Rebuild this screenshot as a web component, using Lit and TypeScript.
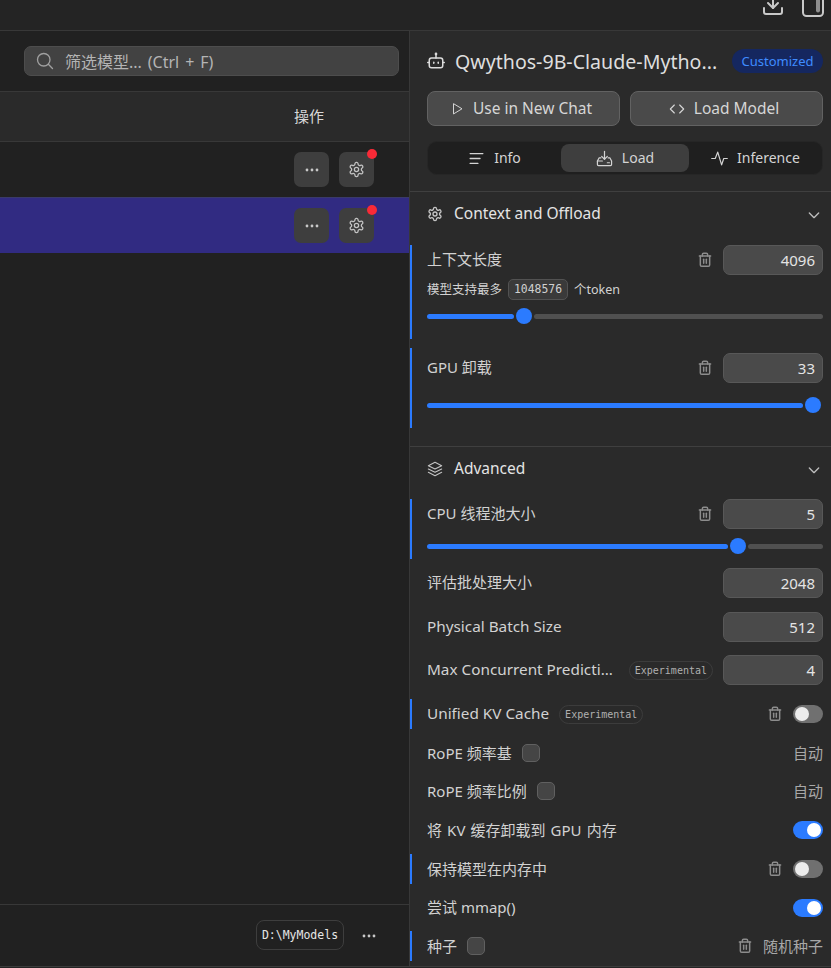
import { LitElement, html, css, svg } from "lit";
import { customElement } from "lit/decorators.js";

const ic = (size: number, body: unknown, sw = 2, cls = "") =>
  html`<svg class=${cls} width=${size} height=${size} viewBox="0 0 24 24" fill="none" stroke="currentColor" stroke-width=${sw} stroke-linecap="round" stroke-linejoin="round">${body}</svg>`;

const gearP = svg`<path d="M12.22 2h-.44a2 2 0 0 0-2 2v.18a2 2 0 0 1-1 1.73l-.43.25a2 2 0 0 1-2 0l-.15-.08a2 2 0 0 0-2.73.73l-.22.38a2 2 0 0 0 .73 2.73l.15.1a2 2 0 0 1 1 1.72v.51a2 2 0 0 1-1 1.74l-.15.09a2 2 0 0 0-.73 2.73l.22.38a2 2 0 0 0 2.73.73l.15-.08a2 2 0 0 1 2 0l.43.25a2 2 0 0 1 1 1.73V20a2 2 0 0 0 2 2h.44a2 2 0 0 0 2-2v-.18a2 2 0 0 1 1-1.73l.43-.25a2 2 0 0 1 2 0l.15.08a2 2 0 0 0 2.73-.73l.22-.39a2 2 0 0 0-.73-2.73l-.15-.08a2 2 0 0 1-1-1.74v-.5a2 2 0 0 1 1-1.74l.15-.09a2 2 0 0 0 .73-2.73l-.22-.38a2 2 0 0 0-2.73-.73l-.15.08a2 2 0 0 1-2 0l-.43-.25a2 2 0 0 1-1-1.73V4a2 2 0 0 0-2-2z"/><circle cx="12" cy="12" r="3"/>`;
const trashP = svg`<path d="M3.5 6h17"/><path d="M19 6v13.5a2 2 0 0 1-2 2H7a2 2 0 0 1-2-2V6"/><path d="M8 6V4a2 2 0 0 1 2-2h4a2 2 0 0 1 2 2v2"/><path d="M10 11v6"/><path d="M14 11v6"/>`;
const chevP = svg`<path d="m5 9 7 7 7-7"/>`;
const dots = html`<svg class="dots" width="14" height="4" viewBox="0 0 14 4"><circle cx="2" cy="2" r="1.4"/><circle cx="7" cy="2" r="1.4"/><circle cx="12" cy="2" r="1.4"/></svg>`;

@customElement("app-root")
export class AppRoot extends LitElement {
  static styles = css`
    :host { display: block; width: 831px; height: 968px; overflow: hidden; background: #242424; color: #dcdcdc;
      font-family: "Noto Sans", "Noto Sans CJK SC", sans-serif; font-size: 15px; }
    * { box-sizing: border-box; }
    svg { display: block; flex: none; }
    .top { height: 31px; border-bottom: 1px solid #383838; background: #242424; display: flex; justify-content: flex-end; align-items: flex-end; padding-right: 6px; gap: 16px; overflow: hidden; color: #c8c8c8; }
    .top svg { margin-bottom: 13px; }
    .main { display: flex; height: 936px; border-bottom: 1px solid #3c3c3c; }
    .left { width: 410px; flex: none; background: #212121; border-right: 1px solid #383838; display: flex; flex-direction: column; }
    .search-bar { height: 61px; border-bottom: 1px solid #383838; padding: 15px 10px 0 24px; }
    .search { height: 30px; border: 1px solid #4d4d4d; border-radius: 7px; background: #424242; display: flex; align-items: center; padding-left: 10px; gap: 10px; color: #b4b4b4; font-size: 16px; word-spacing: 1.8px; }
    .search svg { color: #a0a0a0; }
    .thead { height: 50px; background: #2a2a2a; border-bottom: 1px solid #383838; display: flex; align-items: center; padding: 0 0 2px 294px; font-size: 15px; color: #d8d8d8; }
    .row { height: 55px; display: flex; align-items: center; padding-left: 294px; gap: 10px; }
    .row.sel { background: #312b82; height: 56px; border-top: 1px solid #3a3a6a; }
    .iconbtn { width: 35px; height: 35px; border-radius: 7px; background: #3e3e3e; display: flex; align-items: center; justify-content: center; position: relative; color: #c4c4c4; }
    .dots { fill: #c8c8c8; }
    .dot { position: absolute; right: -3px; top: -3px; width: 10px; height: 10px; border-radius: 50%; background: #f92a37; }
    .spacer { flex: 1; }
    .foot { height: 62px; border-top: 1px solid #383838; display: flex; align-items: center; padding-left: 256px; gap: 18px; }
    .path { height: 30px; width: 88px; margin-bottom: 2px; border: 1px solid #3e3e3e; border-radius: 8px; display: flex; align-items: center; justify-content: center; font-family: "DejaVu Sans Mono", monospace; font-size: 11.5px; color: #e6e6e6; }
    .right { flex: 1; background: #2a2a2a; display: flex; flex-direction: column; }
    .head { height: 161px; flex: none; padding: 0 8px 0 17px; border-bottom: 1px solid #3f3f3f; display: flex; flex-direction: column; }
    .title { height: 60px; display: flex; align-items: center; color: #dcdcdc; }
    .title .name { margin-left: 10px; width: 267px; font-size: 19.6px; font-weight: 400; white-space: nowrap; color: #dedede; }
    .badge { margin-left: 10px; width: 91px; height: 24px; border-radius: 12px; background: #15275f; color: #3f8cff; font-size: 13px; display: flex; align-items: center; justify-content: center; }
    .btns { display: grid; grid-template-columns: 1fr 1fr; gap: 10px; }
    .btn { height: 35px; border: 1px solid #626262; border-radius: 8px; background: #4a4a4a; display: flex; align-items: center; justify-content: center; gap: 9px; color: #d6d6d6; font-size: 15.5px; }
    .btn span { padding: 0 5px 2px 0; }
    .tab span { padding-bottom: 2px; }
    .tabs { margin-top: 15px; height: 34px; border: 1px solid #262626; border-radius: 10px; background: #1f1f1f; display: grid; grid-template-columns: 133px 128px 1fr; padding: 2px 0; }
    .tab { display: flex; align-items: center; justify-content: center; gap: 9px; border-radius: 8px; color: #d4d4d4; font-size: 14px; }
    .tab.on { background: #3e3e3e; }
    .sec { height: 44px; flex: none; display: flex; align-items: center; padding: 0 9px 0 17px; gap: 11px; color: #e4e4e4; font-size: 15.5px; font-weight: 400; }
    .sec span { padding-bottom: 2px; }
    .sec svg { color: #c4c4c4; }
    .sec .chev { margin: 2px 0 0 auto; color: #bdbdbd; }
    .setting { position: relative; padding: 0 8px 0 17px; }
    .setting.mod::before { content: ""; position: absolute; left: 0; top: 0; bottom: 0; width: 2px; background: #2b7bff; }
    .line { height: 30px; display: flex; align-items: center; }
    .lab { color: #d2d2d2; font-size: 15px; white-space: nowrap; padding-bottom: 2px; }
    .lab.up { padding-bottom: 4px; }
    .lab.lat { font-size: 15.3px; }
    .lab.ws { word-spacing: 1.2px; }
    .push { margin-left: auto; }
    .trash { color: #8c8c8c; }
    .input { width: 100px; height: 30px; border: 1px solid #585858; border-radius: 7px; background: #4a4a4a; display: flex; align-items: center; justify-content: flex-end; padding-right: 7px; color: #e4e4e4; font-size: 15px; margin-left: 10px; }
    .sub { display: flex; align-items: center; height: 22px; margin-top: 3px; font-size: 12.5px; color: #d2d2d2; gap: 6px; }
    .sub span.t { padding-bottom: 2px; }
    .chip { width: 60px; height: 21px; border: 1px solid #525252; border-radius: 5px; background: #3a3a3a; font-family: "DejaVu Sans Mono", monospace; font-size: 11.4px; display: flex; align-items: center; justify-content: center; color: #d0d0d0; }
    .slider { height: 16px; display: flex; align-items: center; }
    .track { height: 5px; border-radius: 3px; background: #505050; flex: 1; }
    .fill { height: 5px; border-radius: 3px; background: #2b7bff; flex: none; }
    .fill.full { flex: 1; }
    .thumb { width: 16px; height: 16px; border-radius: 50%; background: #2b7bff; flex: none; margin: 0 2px; }
    .exp { height: 19px; padding: 0 5px; border: 1px solid #3c3c3c; border-radius: 10px; font-family: "DejaVu Sans Mono", monospace; font-size: 10px; color: #b0b0b0; display: flex; align-items: center; }
    .line > .lab + .exp { margin-left: 10px; }
    .toggle { width: 30px; height: 18px; border-radius: 9px; background: #707070; display: flex; align-items: center; padding: 0 2px; margin-left: 10px; }
    .toggle i { width: 14px; height: 14px; border-radius: 50%; background: #ececec; display: block; }
    .toggle.on { background: #2b7bff; justify-content: flex-end; }
    .toggle.on i { background: #fff; }
    .check { width: 18px; height: 18px; border: 1px solid #606060; border-radius: 5px; background: #454545; margin-left: 10px; }
    .auto { color: #a8a8a8; font-size: 15px; padding-bottom: 2px; }
    .auto.seed { margin-left: 10px; }
    .divider { height: 1px; flex: none; background: #3f3f3f; margin-top: 18px; }
    .m8 { margin-top: 8px; } .m9 { margin-top: 9px; } .m13 { margin-top: 13px; } .m14 { margin-top: 14px; }
    .h94 { height: 94px; } .h80 { height: 80px; padding-top: 5px; } .h60 { height: 60px; }
    .s8 { margin-top: 8px; } .s14 { margin-top: 14px; } .s9 { margin-top: 9px; }
  `;

  private trash() { return ic(16, trashP, 2.2, "trash"); }

  private row(sel = false) {
    return html`<div class="row ${sel ? "sel" : ""}">
      <div class="iconbtn">${dots}</div>
      <div class="iconbtn">${ic(17, gearP, 1.8)}<span class="dot"></span></div>
    </div>`;
  }

  render() {
    return html`
      <div class="top">
        ${ic(24, svg`<path d="M12 3v12"/><path d="m7 10 5 5 5-5"/><path d="M21 15v4a2 2 0 0 1-2 2H5a2 2 0 0 1-2-2v-4"/>`)}
        ${ic(24, svg`<rect x="2" y="2" width="20" height="21" rx="3.500"/><path d="M17 6v11.500" stroke-width="4" opacity=".65"/>`)}
      </div>
      <div class="main">
        <div class="left">
          <div class="search-bar"><div class="search">
            ${ic(20, svg`<circle cx="10.500" cy="10.500" r="7.500"/><path d="m21 21-5-5"/>`, 1.6)}
            <span>筛选模型... (Ctrl + F)</span>
          </div></div>
          <div class="thead">操作</div>
          ${this.row()}
          ${this.row(true)}
          <div class="spacer"></div>
          <div class="foot"><div class="path">D:\\MyModels</div>${dots}</div>
        </div>
        <div class="right">
          <div class="head">
            <div class="title">
              ${ic(18, svg`<path d="M12 8V3.500"/><circle cx="12" cy="2.500" r=".8"/><rect x="3" y="8" width="18" height="13" rx="3"/><path d="M1 14h2"/><path d="M21 14h2"/><path d="M9 13.500v1.500"/><path d="M15 13.500v1.500"/>`)}
              <span class="name">Qwythos-9B-Claude-Mytho...</span>
              <span class="badge">Customized</span>
            </div>
            <div class="btns">
              <div class="btn">${ic(14, svg`<path d="M6 3.500v17l14-8.500z"/>`, 1.7)}<span>Use in New Chat</span></div>
              <div class="btn">${ic(16, svg`<path d="m8 6-6 6 6 6"/><path d="m16 6 6 6-6 6"/>`, 1.7)}<span>Load Model</span></div>
            </div>
            <div class="tabs">
              <div class="tab">${ic(17, svg`<path d="M3 5h18"/><path d="M3 12h14"/><path d="M3 19h11"/>`, 1.8)}<span>Info</span></div>
              <div class="tab on">${ic(17, svg`<path d="M12 2v11"/><path d="m8 9 4 4 4-4"/><path d="M7 11H4.500L2 15.500v5a1.500 1.500 0 0 0 1.500 1.500h17a1.500 1.500 0 0 0 1.500-1.500v-5L19.500 11H17"/><path d="M2 15.500h7"/><path d="M16 18h3"/>`, 1.7)}<span>Load</span></div>
              <div class="tab">${ic(17, svg`<path d="M1 12h5l3.500-9 5.500 18 3-9h5"/>`, 1.7)}<span>Inference</span></div>
            </div>
          </div>

          <div class="sec">${ic(16, gearP)}<span>Context and Offload</span>${ic(16, chevP, 2, "chev")}</div>
          <div class="setting mod m9 h94">
            <div class="line"><span class="lab up">上下文长度</span><span class="push"></span>${this.trash()}<div class="input">4096</div></div>
            <div class="sub"><span class="t">模型支持最多</span><span class="chip">1048576</span><span class="t">个token</span></div>
            <div class="slider s8"><div class="fill" style="width:87px"></div><div class="thumb"></div><div class="track"></div></div>
          </div>
          <div class="setting mod m9 h80">
            <div class="line"><span class="lab up">GPU 卸载</span><span class="push"></span>${this.trash()}<div class="input">33</div></div>
            <div class="slider s14"><div class="fill full"></div><div class="thumb"></div></div>
          </div>
          <div class="divider"></div>

          <div class="sec">${ic(16, svg`<path d="m12 2 10 5-10 5L2 7z"/><path d="m2 12 10 5 10-5"/><path d="m2 17 10 5 10-5"/>`, 1.6)}<span>Advanced</span>${ic(16, chevP, 2, "chev")}</div>
          <div class="setting mod m8 h60">
            <div class="line"><span class="lab up">CPU 线程池大小</span><span class="push"></span>${this.trash()}<div class="input">5</div></div>
            <div class="slider s9"><div class="fill" style="width:301px"></div><div class="thumb"></div><div class="track"></div></div>
          </div>
          <div class="setting m9"><div class="line"><span class="lab up">评估批处理大小</span><span class="push"></span><div class="input">2048</div></div></div>
          <div class="setting m14"><div class="line"><span class="lab lat">Physical Batch Size</span><span class="push"></span><div class="input">512</div></div></div>
          <div class="setting m13"><div class="line"><span class="lab lat">Max Concurrent Predicti...</span><span class="push"></span><span class="exp">Experimental</span><div class="input">4</div></div></div>
          <div class="setting mod m14"><div class="line"><span class="lab lat">Unified KV Cache</span><span class="exp">Experimental</span><span class="push"></span>${this.trash()}<div class="toggle"><i></i></div></div></div>
          <div class="setting m9"><div class="line"><span class="lab">RoPE 频率基</span><div class="check"></div><span class="push"></span><span class="auto">自动</span></div></div>
          <div class="setting m8"><div class="line"><span class="lab">RoPE 频率比例</span><div class="check"></div><span class="push"></span><span class="auto">自动</span></div></div>
          <div class="setting m9"><div class="line"><span class="lab ws">将 KV 缓存卸载到 GPU 内存</span><span class="push"></span><div class="toggle on"><i></i></div></div></div>
          <div class="setting mod m9"><div class="line"><span class="lab">保持模型在内存中</span><span class="push"></span>${this.trash()}<div class="toggle"><i></i></div></div></div>
          <div class="setting m9"><div class="line"><span class="lab up">尝试 mmap()</span><span class="push"></span><div class="toggle on"><i></i></div></div></div>
          <div class="setting mod m8"><div class="line"><span class="lab">种子</span><div class="check"></div><span class="push"></span>${this.trash()}<span class="auto seed">随机种子</span></div></div>
        </div>
      </div>
    `;
  }
}
